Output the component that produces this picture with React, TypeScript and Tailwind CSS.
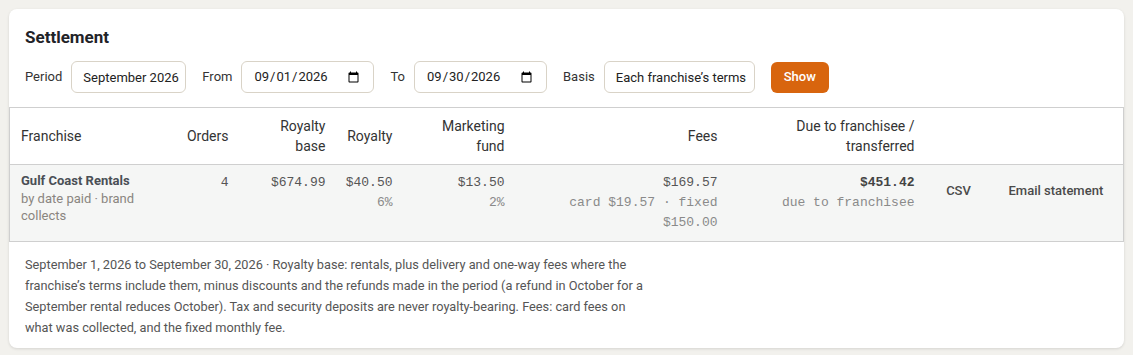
import React from "react";

type Row = {
  name: string;
  basis: string;
  orders: number;
  royaltyBase: string;
  royalty: string;
  royaltyRate: string;
  marketing: string;
  marketingRate: string;
  fees: string;
  feeDetail: string[];
  due: string;
  dueLabel: string;
};

const rows: Row[] = [
  {
    name: "Gulf Coast Rentals",
    basis: "by date paid · brand collects",
    orders: 4,
    royaltyBase: "$674.99",
    royalty: "$40.50",
    royaltyRate: "6%",
    marketing: "$13.50",
    marketingRate: "2%",
    fees: "$169.57",
    feeDetail: ["card $19.57 · fixed", "$150.00"],
    due: "$451.42",
    dueLabel: "due to franchisee",
  },
];

const inputCls =
  "h-8 rounded-md border border-[#d9d3c7] bg-white pl-[11px] pr-[4px] text-[13px] text-[#222] outline-none";

const Field = ({ label, children }: { label: string; children: React.ReactNode }) => (
  <label className="flex items-center gap-[9px] text-[13px] text-[#333]">
    <span>{label}</span>
    {children}
  </label>
);

const mono = "py-2 pr-3 text-right font-['Liberation_Mono',monospace] text-[13px] leading-5 text-[#555]";

export default function App() {
  return (
    <div className="min-h-screen bg-[#f2f1ed] px-[9px] pt-[9px] font-[Roboto,sans-serif]">
      <div className="rounded-lg bg-white shadow-[0_1px_3px_rgba(0,0,0,0.12)]">
        {/* Header + filters */}
        <div className="px-4 pt-4">
          <h2 className="text-[17px] leading-6 font-bold text-[#1f2328]">Settlement</h2>
          <div className="mt-3 flex items-center gap-4">
            <Field label="Period">
              <input className={`${inputCls} w-[115px]`} defaultValue="September 2026" />
            </Field>
            <Field label="From">
              <input type="date" className={`${inputCls} w-[133px] pr-[11px]`} defaultValue="2026-09-01" />
            </Field>
            <Field label="To">
              <input type="date" className={`${inputCls} w-[133px] pr-[11px]`} defaultValue="2026-09-30" />
            </Field>
            <Field label="Basis">
              <input className={`${inputCls} w-[151px]`} defaultValue="Each franchise’s terms" />
            </Field>
            <button className="h-[31px] w-[58px] rounded-md bg-[#d8650e] text-[13px] font-medium text-white">
              Show
            </button>
          </div>
        </div>

        {/* Table */}
        <table className="mt-[14px] w-full table-fixed border-collapse border border-[#cfcfcf]">
          <colgroup>
            <col className="w-[160px]" />
            <col className="w-[71px]" />
            <col className="w-[97px]" />
            <col className="w-[67px]" />
            <col className="w-[112px]" />
            <col className="w-[213px]" />
            <col className="w-[197px]" />
            <col className="w-[64px]" />
            <col />
          </colgroup>
          <thead>
            <tr className="border-b border-[#cfcfcf] text-[14px] leading-5 text-[#333]">
              <th className="py-2 pl-[11px] text-left font-normal">Franchise</th>
              <th className="py-2 pr-3 text-right font-normal">Orders</th>
              <th className="py-2 pr-3 text-right font-normal">
                Royalty
                <br />
                base
              </th>
              <th className="py-2 pr-3 text-right font-normal">Royalty</th>
              <th className="py-2 pr-3 text-right font-normal">
                Marketing
                <br />
                fund
              </th>
              <th className="py-2 pr-3 text-right font-normal">Fees</th>
              <th className="py-2 pr-3 text-right font-normal">
                Due to franchisee /
                <br />
                transferred
              </th>
              <th />
              <th />
            </tr>
          </thead>
          <tbody>
            {rows.map((r) => (
              <tr key={r.name} className="bg-[#f5f6f5] align-top">
                <td className="pt-[7px] pb-2 pl-[11px] pr-2 text-[13px]">
                  <div className="leading-[18px] font-bold text-[#4a4f55]">{r.name}</div>
                  <div className="leading-[17px] text-[#8a8580]">{r.basis}</div>
                </td>
                <td className={mono}>{r.orders}</td>
                <td className={mono}>{r.royaltyBase}</td>
                <td className={mono}>
                  <div>{r.royalty}</div>
                  <div className="text-[#8a8a8a]">{r.royaltyRate}</div>
                </td>
                <td className={mono}>
                  <div>{r.marketing}</div>
                  <div className="text-[#8a8a8a]">{r.marketingRate}</div>
                </td>
                <td className={mono}>
                  <div>{r.fees}</div>
                  {r.feeDetail.map((d) => (
                    <div key={d} className="text-[#8a8a8a]">{d}</div>
                  ))}
                </td>
                <td className={mono}>
                  <div className="font-bold text-[#444]">{r.due}</div>
                  <div className="text-[#8a8a8a]">{r.dueLabel}</div>
                </td>
                <td className="py-2 text-center">
                  <button className="py-2 text-[13px] leading-5 font-medium text-[#4a4a4a]">CSV</button>
                </td>
                <td className="py-2 pl-[18px]">
                  <button className="py-2 text-[13px] leading-5 font-medium text-[#4a4a4a]">Email statement</button>
                </td>
              </tr>
            ))}
          </tbody>
        </table>

        {/* Notes */}
        <p className="max-w-[657px] px-4 pt-3 pb-[10px] text-[12.75px] leading-[21px] text-[#555]">
          September 1, 2026 to September 30, 2026 · Royalty base: rentals, plus delivery and one-way fees where
          the franchise’s terms include them, minus discounts and the refunds made in the period (a refund in
          October for a September rental reduces October). Tax and security deposits are never royalty-bearing.
          Fees: card fees on what was collected, and the fixed monthly fee.
        </p>
      </div>
    </div>
  );
}
